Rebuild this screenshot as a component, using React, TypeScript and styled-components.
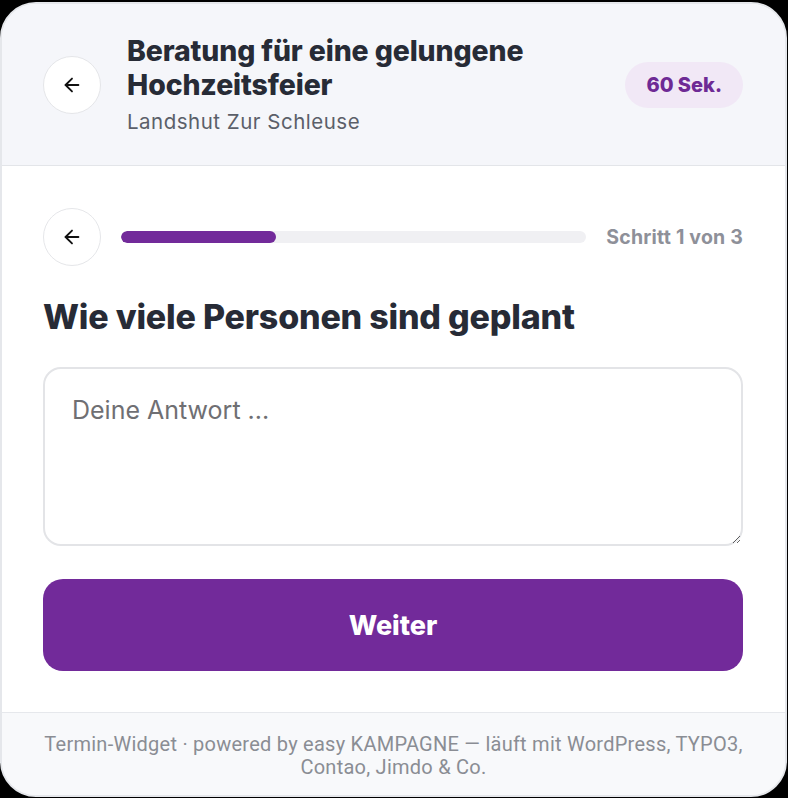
import React from "react";
import styled, { createGlobalStyle } from "styled-components";

const Global = createGlobalStyle`
  html, body { margin: 0; padding: 0; background: #000; }
  body { padding-top: 2px; font-family: Inter, "Noto Sans", sans-serif; }
  * { box-sizing: border-box; }
`;

const Card = styled.div`
  width: 787px;
  height: 795px;
  background: #fff;
  border: 2px solid #e5e7eb;
  border-radius: 36px;
  overflow: hidden;
  display: flex;
  flex-direction: column;
`;

const Header = styled.header`
  height: 162px;
  background: #f5f6fa;
  border-bottom: 1px solid #e3e5e9;
  display: flex;
  align-items: center;
  padding: 0 42px 0 41px;
  gap: 26px;
`;

const CircleButton = styled.button`
  width: 58px;
  height: 58px;
  flex: none;
  border-radius: 50%;
  background: #fff;
  border: 1.5px solid #e5e6e9;
  display: flex;
  align-items: center;
  justify-content: center;
  padding: 0;
  color: #111;
`;

const TitleBlock = styled.div`
  flex: 1;
  display: flex;
  flex-direction: column;
`;

const Title = styled.h1`
  margin: 0;
  font-size: 28.4px;
  line-height: 34px;
  font-weight: 800;
  color: #272b36;
  letter-spacing: -0.1px;
  max-width: 450px;
`;

const Subtitle = styled.div`
  margin-top: 7px;
  font-size: 20.5px;
  line-height: 26px;
  color: #5b5f69;
  letter-spacing: 0.5px;
`;

const Badge = styled.div`
  flex: none;
  height: 46px;
  padding: 0 21px;
  border-radius: 23px;
  background: #f1e8f6;
  color: #6e2a95;
  font-size: 20px;
  font-weight: 800;
  display: flex;
  align-items: center;
`;

const Body = styled.main`
  flex: 1;
  padding: 42px 42px 41px 41px;
  display: flex;
  flex-direction: column;
`;

const ProgressRow = styled.div`
  display: flex;
  align-items: center;
  gap: 20px;
`;

const Track = styled.div`
  flex: 1;
  height: 12px;
  border-radius: 6px;
  background: #f0f0f3;
  overflow: hidden;
`;

const Fill = styled.div`
  height: 100%;
  border-radius: 6px;
  background: #722a9a;
`;

const StepLabel = styled.div`
  font-size: 19.5px;
  font-weight: 700;
  color: #8e9099;
  white-space: nowrap;
  letter-spacing: 0.2px;
`;

const Question = styled.h2`
  margin: 31px 0 0;
  font-size: 34px;
  line-height: 40px;
  font-weight: 800;
  color: #272b36;
  letter-spacing: -0.2px;
`;

const Answer = styled.textarea`
  margin-top: 30px;
  height: 179px;
  width: 100%;
  border: 2px solid #e3e4e7;
  border-radius: 18px;
  padding: 26px 27px;
  font-family: Inter, "Noto Sans", sans-serif;
  font-size: 25px;
  color: #333;
  outline: none;
  resize: vertical;
  &::placeholder { color: #6f6f73; }
`;

const Submit = styled.button`
  margin-top: 33px;
  height: 92px;
  width: 100%;
  border: none;
  border-radius: 20px;
  background: #722a9a;
  color: #fff;
  font-family: Inter, "Noto Sans", sans-serif;
  font-size: 27px;
  font-weight: 800;
`;

const Footer = styled.footer`
  border-top: 1px solid #e6e8ec;
  background: #f8f9fb;
  flex: 1;
  display: flex;
  align-items: center;
  justify-content: center;
  padding: 4px 34px 0;
  text-align: center;
  font-family: Roboto, sans-serif;
  font-size: 20px;
  line-height: 23px;
  letter-spacing: 0.25px;
  color: #8a8d94;
`;

const Arrow = () => (
  <svg width="22" height="22" viewBox="0 0 24 24" fill="none" stroke="currentColor" strokeWidth="2" strokeLinecap="round" strokeLinejoin="round">
    <path d="M19 12H5" />
    <path d="M12 19l-7-7 7-7" />
  </svg>
);

export default function App() {
  return (
    <>
      <Global />
      <Card>
        <Header>
          <CircleButton aria-label="Zurück"><Arrow /></CircleButton>
          <TitleBlock>
            <Title>Beratung für eine gelungene Hochzeitsfeier</Title>
            <Subtitle>Landshut Zur Schleuse</Subtitle>
          </TitleBlock>
          <Badge>60 Sek.</Badge>
        </Header>
        <Body>
          <ProgressRow>
            <CircleButton aria-label="Zurück"><Arrow /></CircleButton>
            <Track><Fill style={{ width: "33.3%" }} /></Track>
            <StepLabel>Schritt 1 von 3</StepLabel>
          </ProgressRow>
          <Question>Wie viele Personen sind geplant</Question>
          <Answer placeholder="Deine Antwort ..." />
          <Submit>Weiter</Submit>
        </Body>
        <Footer>
          Termin-Widget · powered by easy KAMPAGNE — läuft mit WordPress, TYPO3, Contao, Jimdo &amp; Co.
        </Footer>
      </Card>
    </>
  );
}
